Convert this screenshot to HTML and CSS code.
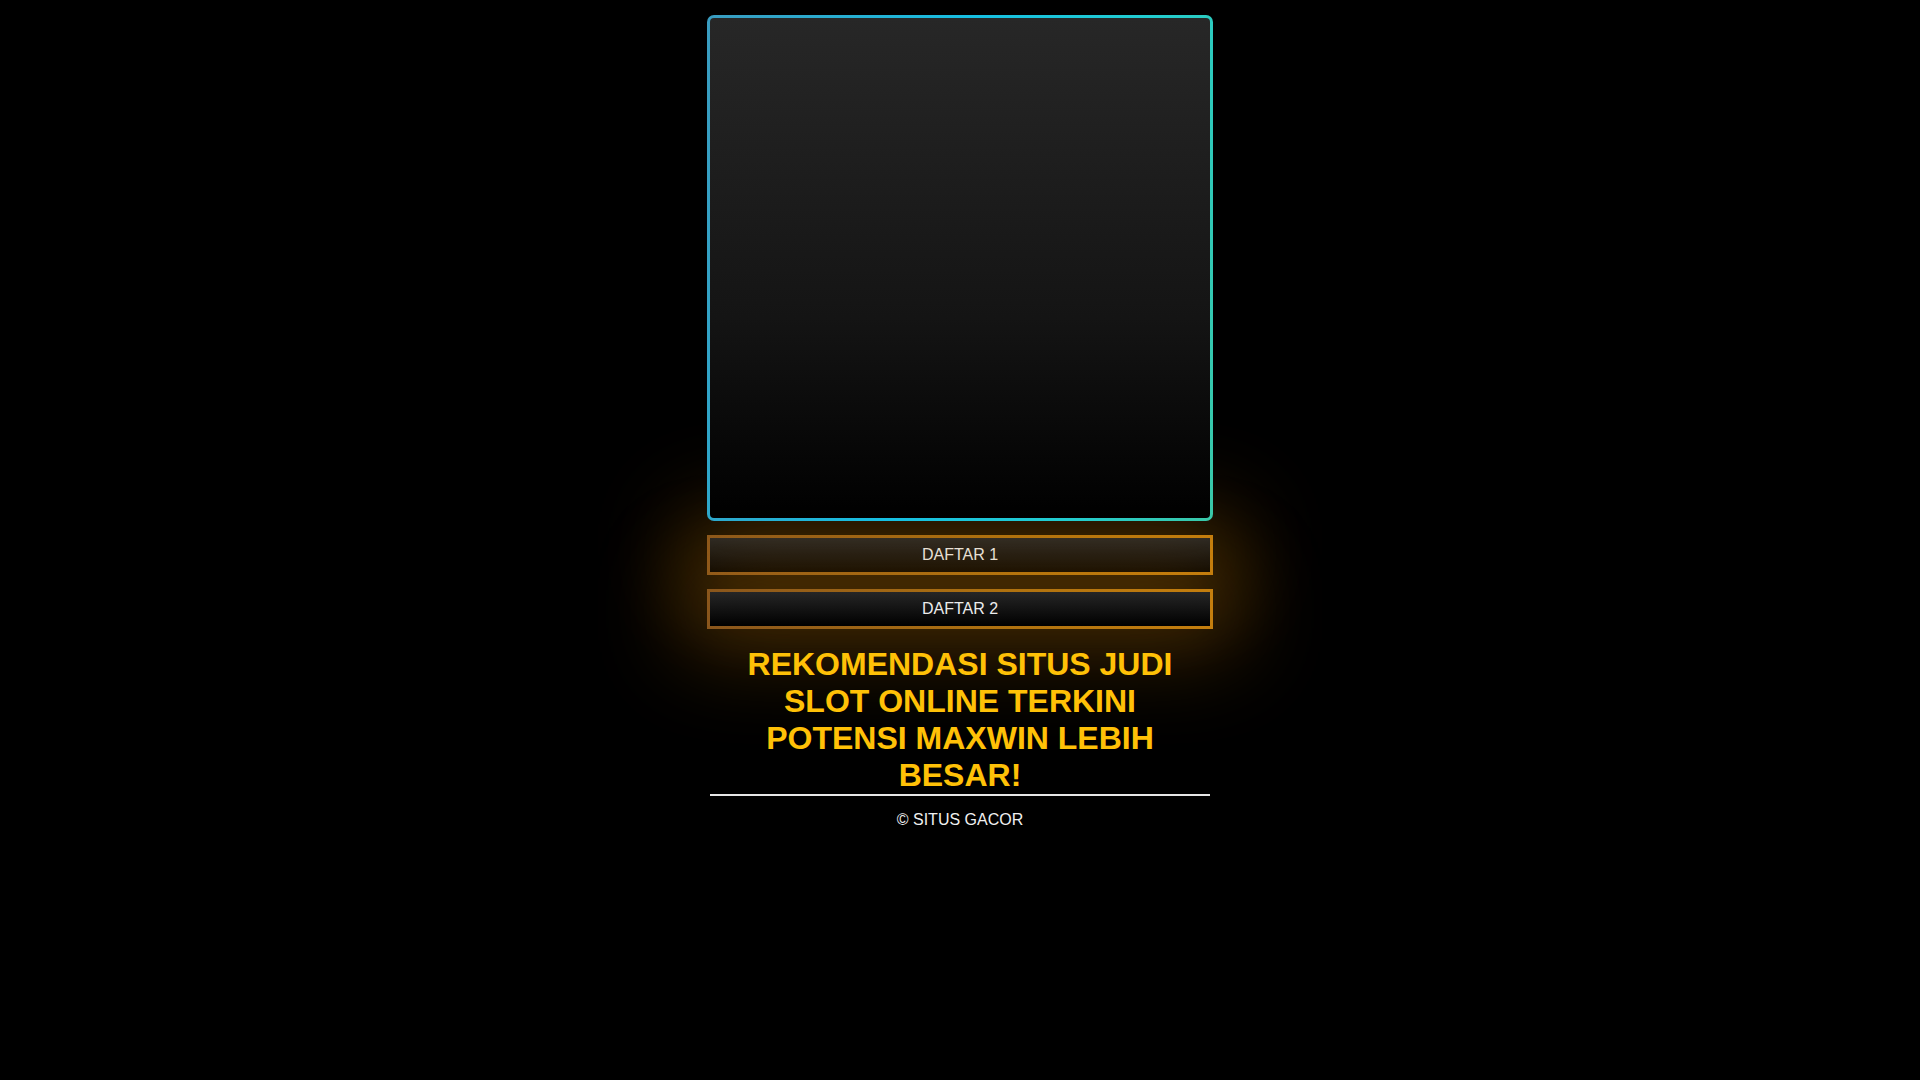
FILE: index.html
```html
<!DOCTYPE html>
<html lang="id">
<head>
<meta charset="utf-8">
<title>Situs Gacor</title>
<link rel="stylesheet" href="styles.css">
</head>
<body>
<main class="wrap">
  <div class="hero"></div>
  <a class="btn" href="#">DAFTAR 1</a>
  <a class="btn" href="#">DAFTAR 2</a>
  <section class="info">
    <h1 class="title">REKOMENDASI SITUS JUDI SLOT ONLINE TERKINI POTENSI MAXWIN LEBIH BESAR!</h1>
    <hr class="rule">
    <footer class="foot">© SITUS GACOR</footer>
  </section>
</main>
</body>
</html>
```
FILE: styles.css
```css
html, body {
  margin: 0;
  padding: 0;
  background: #000;
}
body {
  font-family: "Liberation Sans", Arial, sans-serif;
  color: #fff;
}
.wrap {
  width: 506px;
  margin: 15px auto 0;
  display: flex;
  flex-direction: column;
  gap: 14px;
}
.hero {
  box-sizing: border-box;
  width: 506px;
  height: 506px;
  border: 3px solid transparent;
  border-radius: 7px;
  background:
    linear-gradient(180deg, #272727 0%, #141414 60%, #000 100%) padding-box,
    linear-gradient(100deg, #3a9cc0 0%, #16bfe2 45%, #22cdd0 75%, #3ac8a8 100%) border-box;
  position: relative;
  z-index: 1;
}
.btn {
  box-sizing: border-box;
  display: flex;
  align-items: center;
  justify-content: center;
  height: 40px;
  border: 3px solid transparent;
  background:
    linear-gradient(180deg, #262626 0%, #000 100%) padding-box,
    linear-gradient(90deg, #8a561c 0%, #b0720f 60%, #c47e0e 100%) border-box;
  color: #ececec;
  font-size: 16px;
  text-decoration: none;
  box-shadow: 0 0 90px 25px rgba(210, 130, 10, 0.28);
}
.info {
  margin-top: 3px;
  text-align: center;
  position: relative;
  z-index: 1;
}
.title {
  margin: 0 auto;
  width: 440px;
  font-size: 32px;
  line-height: 37px;
  font-weight: bold;
  color: #ffc107;
}
.rule {
  width: 500px;
  height: 0;
  margin: 0 auto;
  border: 0;
  border-top: 2px solid #e6e6e6;
}
.foot {
  margin-top: 15px;
  font-size: 16px;
  line-height: 18px;
  color: #f0f0f0;
}
```
